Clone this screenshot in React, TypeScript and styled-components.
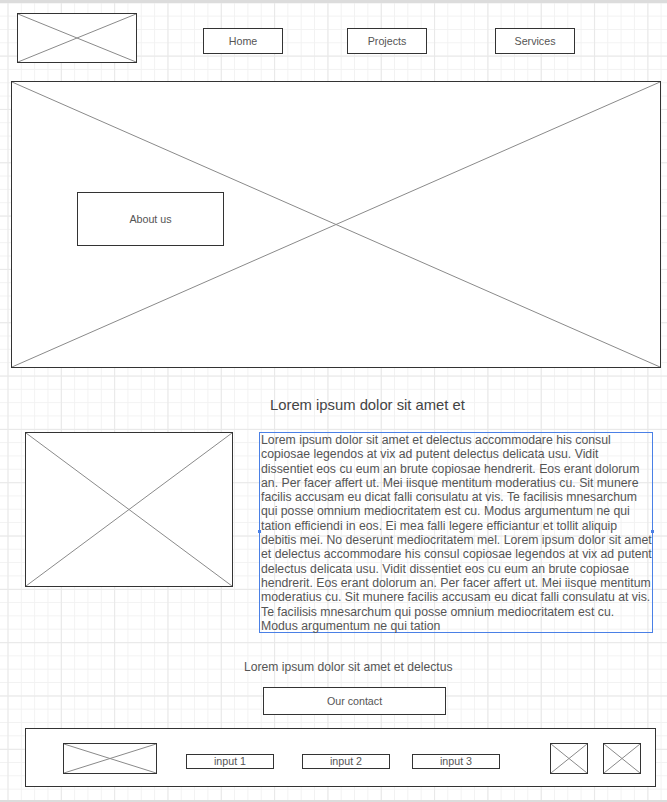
import React from "react";
import styled, { createGlobalStyle } from "styled-components";

const GlobalStyle = createGlobalStyle`
  html, body {
    margin: 0;
    padding: 0;
  }
  body {
    font-family: "Liberation Sans", Arial, sans-serif;
    color: #555;
    background-color: #fff;
    background-image:
      linear-gradient(to right, #e8e8e8 1px, transparent 1px),
      linear-gradient(to bottom, #e8e8e8 1px, transparent 1px),
      linear-gradient(to right, #f2f2f2 1px, transparent 1px),
      linear-gradient(to bottom, #f2f2f2 1px, transparent 1px);
    background-size: 53.333px 53.333px, 53.333px 53.333px, 13.333px 13.333px, 13.333px 13.333px;
    background-position: 7.5px 2.3px, 7.5px 2.3px, 7.5px 2.3px, 7.5px 2.3px;
  }
`;

const Page = styled.div`
  width: 667px;
  height: 802px;
  display: flex;
  flex-direction: column;
  overflow: hidden;
`;

const Strip = styled.div<{ $h: number }>`
  height: ${(p) => p.$h}px;
  flex-shrink: 0;
  background: #dcdcdc;
`;

const BottomStrip = styled(Strip)`
  margin-top: auto;
`;

const Frame = styled.div<{ $w: number; $h: number }>`
  position: relative;
  box-sizing: border-box;
  width: ${(p) => p.$w}px;
  height: ${(p) => p.$h}px;
  flex-shrink: 0;
  border: 1px solid #333;
  background: #fff;
`;

const CrossSvg = styled.svg`
  position: absolute;
  inset: 0;
  width: 100%;
  height: 100%;
  pointer-events: none;
`;

const Cross = () => (
  <CrossSvg viewBox="0 0 100 100" preserveAspectRatio="none">
    <line x1="0" y1="0" x2="100" y2="100" stroke="#8a8a8a" strokeWidth="1" vectorEffect="non-scaling-stroke" />
    <line x1="0" y1="100" x2="100" y2="0" stroke="#8a8a8a" strokeWidth="1" vectorEffect="non-scaling-stroke" />
  </CrossSvg>
);

const Header = styled.header`
  display: flex;
  align-items: flex-start;
  padding: 10px 0 0 17px;
`;

const Nav = styled.nav`
  display: flex;
  margin: 15px 0 0 66px;
`;

const NavButton = styled.div<{ $gap: number }>`
  box-sizing: border-box;
  width: 80px;
  height: 26px;
  margin-left: ${(p) => p.$gap}px;
  border: 1px solid #333;
  background: #fff;
  font-size: 10.7px;
  line-height: 24px;
  text-align: center;
`;

const HeroWrap = styled.section`
  padding: 18px 0 0 11px;
`;

const Hero = styled(Frame)`
  padding: 110px 0 0 65px;
`;

const AboutButton = styled.div`
  position: relative;
  box-sizing: border-box;
  width: 147px;
  height: 54px;
  border: 1px solid #333;
  background: #fff;
  font-size: 10.7px;
  line-height: 52px;
  text-align: center;
`;

const Title = styled.h2`
  margin: 29px 0 0 270px;
  font-size: 14.8px;
  font-weight: normal;
  line-height: 17px;
  color: #444;
  white-space: nowrap;
`;

const ContentRow = styled.section`
  display: flex;
  align-items: flex-start;
  gap: 26px;
  margin-top: 18px;
  padding-left: 25px;
`;

const TextBox = styled.div`
  position: relative;
  box-sizing: border-box;
  width: 394px;
  height: 201px;
  border: 1px solid #4a80e6;
  padding-left: 1px;
  font-size: 12.27px;
  line-height: 14.3px;
  color: #555;
`;

const TextLine = styled.div`
  white-space: nowrap;
`;

const Handle = styled.span<{ $side: "left" | "right" }>`
  position: absolute;
  top: 97px;
  ${(p) => p.$side}: -2px;
  width: 3px;
  height: 3px;
  background: #4a80e6;
`;

const Caption = styled.p`
  margin: 27px 0 0 244px;
  font-size: 12.15px;
  line-height: 14px;
  color: #555;
  white-space: nowrap;
`;

const ContactButton = styled.div`
  box-sizing: border-box;
  width: 183px;
  height: 28px;
  margin: 13px 0 0 263px;
  border: 1px solid #333;
  background: #fff;
  font-size: 10.7px;
  line-height: 26px;
  text-align: center;
`;

const FooterWrap = styled.footer`
  padding: 13px 0 0 25px;
`;

const Footer = styled(Frame)`
  display: flex;
  align-items: center;
  padding: 2px 0 0 37px;
`;

const InputBox = styled.div<{ $gap: number }>`
  box-sizing: border-box;
  width: 88px;
  height: 15px;
  margin: 6px 0 0 ${(p) => p.$gap}px;
  border: 1px solid #333;
  background: #fff;
  font-size: 10.7px;
  line-height: 13px;
  text-align: center;
`;

const IconBox = styled(Frame)<{ $gap: number }>`
  margin-left: ${(p) => p.$gap}px;
`;

const paragraph = [
  "Lorem ipsum dolor sit amet et delectus accommodare his consul",
  "copiosae legendos at vix ad putent delectus delicata usu. Vidit",
  "dissentiet eos cu eum an brute copiosae hendrerit. Eos erant dolorum",
  "an. Per facer affert ut. Mei iisque mentitum moderatius cu. Sit munere",
  "facilis accusam eu dicat falli consulatu at vis. Te facilisis mnesarchum",
  "qui posse omnium mediocritatem est cu. Modus argumentum ne qui",
  "tation efficiendi in eos. Ei mea falli legere efficiantur et tollit aliquip",
  "debitis mei. No deserunt mediocritatem mel. Lorem ipsum dolor sit amet",
  "et delectus accommodare his consul copiosae legendos at vix ad putent",
  "delectus delicata usu. Vidit dissentiet eos cu eum an brute copiosae",
  "hendrerit. Eos erant dolorum an. Per facer affert ut. Mei iisque mentitum",
  "moderatius cu. Sit munere facilis accusam eu dicat falli consulatu at vis.",
  "Te facilisis mnesarchum qui posse omnium mediocritatem est cu.",
  "Modus argumentum ne qui tation",
];

const navItems = [
  { label: "Home", gap: 0 },
  { label: "Projects", gap: 64 },
  { label: "Services", gap: 68 },
];

const inputs = [
  { label: "input 1", gap: 29 },
  { label: "input 2", gap: 28 },
  { label: "input 3", gap: 22 },
];

export default function App() {
  return (
    <Page>
      <GlobalStyle />
      <Strip $h={3} />
      <Header>
        <Frame $w={120} $h={50}>
          <Cross />
        </Frame>
        <Nav>
          {navItems.map((item) => (
            <NavButton key={item.label} $gap={item.gap}>
              {item.label}
            </NavButton>
          ))}
        </Nav>
      </Header>

      <HeroWrap>
        <Hero $w={650} $h={287}>
          <Cross />
          <AboutButton>About us</AboutButton>
        </Hero>
      </HeroWrap>

      <Title>Lorem ipsum dolor sit amet et</Title>

      <ContentRow>
        <Frame $w={208} $h={155}>
          <Cross />
        </Frame>
        <TextBox>
          {paragraph.map((line, i) => (
            <TextLine key={i}>{line}</TextLine>
          ))}
          <Handle $side="left" />
          <Handle $side="right" />
        </TextBox>
      </ContentRow>

      <Caption>Lorem ipsum dolor sit amet et delectus</Caption>
      <ContactButton>Our contact</ContactButton>

      <FooterWrap>
        <Footer $w={631} $h={59}>
          <Frame $w={94} $h={31}>
            <Cross />
          </Frame>
          {inputs.map((input) => (
            <InputBox key={input.label} $gap={input.gap}>
              {input.label}
            </InputBox>
          ))}
          <IconBox $w={38} $h={31} $gap={50}>
            <Cross />
          </IconBox>
          <IconBox $w={38} $h={31} $gap={15}>
            <Cross />
          </IconBox>
        </Footer>
      </FooterWrap>
      <BottomStrip $h={2} />
    </Page>
  );
}
